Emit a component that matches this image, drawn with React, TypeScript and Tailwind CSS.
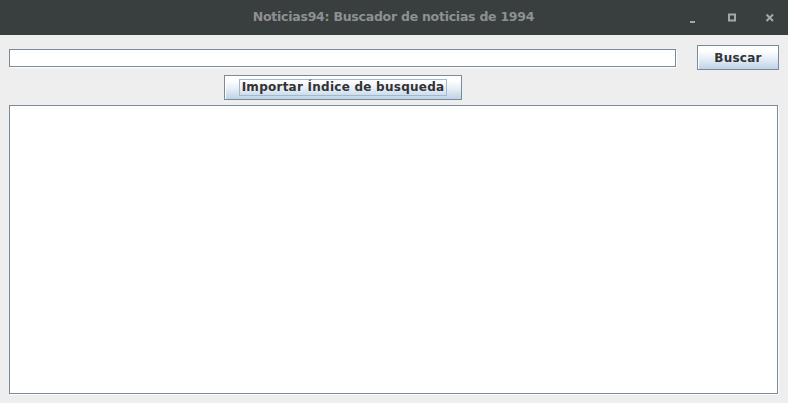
import React from "react"

const btn =
  "border border-[#7a8a99] bg-[linear-gradient(to_bottom,#fbfcfe_0%,#ffffff_20%,#e6eef6_55%,#bed3e8_100%)] text-[12px] font-bold tracking-[0.25px] text-[#333333] shadow-[inset_1px_1px_0_#ffffff] flex items-center justify-center"

export default function App() {
  return (
    <div className="w-[788px] h-[403px] bg-[#eeeeee] flex flex-col font-['DejaVu_Sans',sans-serif] overflow-hidden">
      {/* Title bar */}
      <div className="relative h-[35px] bg-[#393f3f] flex items-center justify-center shrink-0">
        <div className="text-[12.5px] font-bold text-[#8e9191] tracking-[-0.25px] ml-[-1px]">
          Noticias94: Buscador de noticias de 1994
        </div>
        <div className="absolute right-0 top-0 h-[35px] flex items-center">
          <svg width="12" height="12" viewBox="0 0 12 12" className="mr-[27px]">
            <rect x="3" y="9" width="5" height="2" fill="#a4a7a7" />
          </svg>
          <svg width="12" height="12" viewBox="0 0 12 12" className="mr-[26px]">
            <rect x="3" y="2.5" width="6" height="6" fill="none" stroke="#a4a7a7" strokeWidth="2" />
          </svg>
          <svg width="12" height="12" viewBox="0 0 12 12" className="mr-[12px]">
            <path d="M2.5 2.5 L9 9 M9 2.5 L2.5 9" stroke="#a4a7a7" strokeWidth="2" />
          </svg>
        </div>
      </div>

      {/* Content */}
      <div className="flex flex-col px-[9px]">
        <div className="mt-[10px] flex items-center">
          <div className="w-[667px] h-[18px] bg-white border border-[#7a8a99] shadow-[1px_1px_0_#ffffff]" />
          <button className={`${btn} ml-[21px] w-[82px] h-[25px]`}>Buscar</button>
        </div>

        <div className="mt-[5px] ml-[215px]">
          <button className={`${btn} w-[238px] h-[25px]`}>
            <span className="border border-[#a3b8cc] px-[2px] leading-[15px]">
              Importar Índice de busqueda
            </span>
          </button>
        </div>

        <div className="mt-[5px] w-[769px] h-[289px] bg-white border border-[#7a8a99] shadow-[1px_1px_0_#ffffff]" />
      </div>
    </div>
  )
}
